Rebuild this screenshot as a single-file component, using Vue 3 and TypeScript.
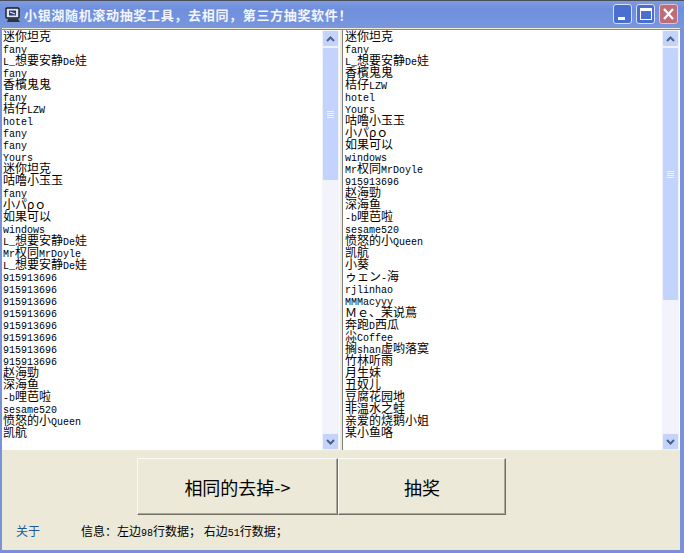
<script setup lang="ts">
const left: string[] = ['迷你坦克','fany','L_想要安静De娃','fany','香檳鬼鬼','fany','桔仔LZW','hotel','fany','fany','Yours','迷你坦克','咕噜小玉玉','fany','小パρｏ','如果可以','windows','L_想要安静De娃','Mr权同MrDoyle','L_想要安静De娃','915913696','915913696','915913696','915913696','915913696','915913696','915913696','915913696','赵海勁','深海鱼','-b哩芭啦','sesame520','愤怒的小Queen','凯航']
const right: string[] = ['迷你坦克','fany','L_想要安静De娃','香檳鬼鬼','桔仔LZW','hotel','Yours','咕噜小玉玉','小パρｏ','如果可以','windows','Mr权同MrDoyle','915913696','赵海勁','深海鱼','-b哩芭啦','sesame520','愤怒的小Queen','凯航','小葵','ゥェン-海','rjlinhao','MMMacyyy','Ｍｅ、茉说蔦','奔跑D西瓜','尛Coffee','搁shan虚哟落寞','竹林听雨','月生妹','丑奴儿','豆腐花园地','非温水之蛙','亲爱的烧鹅小姐','某小鱼咯']

interface Seg { t: string; lat: boolean }
function segs(s: string): Seg[] {
  return (s.match(/[\x20-\x7e]+|[^\x20-\x7e]+/g) ?? []).map((t) => ({ t, lat: /^[\x20-\x7e]/.test(t) }))
}
const lists = [
  { rows: left, thumb: 134 },
  { rows: right, thumb: 254 },
]
</script>

<template>
  <div class="window">
    <header class="titlebar">
      <svg class="appicon" width="18" height="18" viewBox="0 0 18 18">
        <rect x="2" y="2" width="13" height="10" rx="1" fill="#dfe6f2" stroke="#1c1c24" stroke-width="1.4" />
        <rect x="5" y="4.5" width="7" height="5" fill="#2a3a6a" />
        <path d="M4 13h10l2 3H3z" fill="#30343c" />
        <path d="M6 6l5 2" stroke="#e8eef8" stroke-width="1.2" />
      </svg>
      <span class="title">小银湖随机滚动抽奖工具，去相同，第三方抽奖软件！</span>
      <div class="controls">
        <button class="ctl"><svg width="19" height="20" viewBox="0 0 19 20"><rect x="5" y="13" width="7" height="3" fill="#fff" /></svg></button>
        <button class="ctl"><svg width="19" height="20" viewBox="0 0 19 20"><rect x="4.5" y="4.5" width="11" height="11" fill="none" stroke="#fff" /><rect x="4" y="4" width="12" height="3" fill="#fff" /></svg></button>
        <button class="ctl close"><svg width="19" height="20" viewBox="0 0 19 20"><path d="M5 5l9 10M14 5L5 15" stroke="#fff" stroke-width="2.2" /></svg></button>
      </div>
    </header>
    <main class="client">
      <section class="lists">
        <div v-for="(l, i) in lists" :key="i" class="listbox">
          <div class="rows">
            <div v-for="(r, j) in l.rows" :key="j" class="row">
              <span v-for="(s, k) in segs(r)" :key="k" :class="{ lat: s.lat }">{{ s.t }}</span>
            </div>
          </div>
          <div class="sbar">
            <div class="sbtn">
              <svg width="9" height="6" viewBox="0 0 9 6"><path d="M1 5l3.5-3.5L8 5" fill="none" stroke="#4d6185" stroke-width="2" /></svg>
            </div>
            <div class="thumb" :style="{ height: l.thumb + 'px' }">
              <i /><i /><i /><i />
            </div>
            <div class="track" />
            <div class="sbtn">
              <svg width="9" height="6" viewBox="0 0 9 6"><path d="M1 1l3.5 3.5L8 1" fill="none" stroke="#4d6185" stroke-width="2" /></svg>
            </div>
          </div>
        </div>
      </section>
      <section class="actions">
        <button class="big first">相同的去掉-&gt;</button>
        <button class="big second">抽奖</button>
      </section>
      <footer class="status">
        <a class="about">关于</a>
        <span class="info">信息：左边<span class="lat">98</span>行数据； 右边<span class="lat">51</span>行数据；</span>
      </footer>
    </main>
  </div>
</template>

<style>
html, body { margin: 0; background: #ece9d8; }
</style>

<style scoped>
.window {
  width: 684px;
  height: 553px;
  display: flex;
  flex-direction: column;
  overflow: hidden;
  background: #ece9d8;
  font-family: "Noto Sans CJK SC", sans-serif;
  color: #000;
}
.titlebar {
  height: 28px;
  flex: none;
  display: flex;
  align-items: center;
  padding: 0 6px 0 4px;
  box-sizing: border-box;
  border-top: 1px solid #4a4f5c;
  background: linear-gradient(#7f9be0, #6f8fdd 30%, #7594de 80%, #7e97d6);
}
.appicon { flex: none; }
.title {
  margin-left: 2px;
  color: #f2f5fc;
  font-size: 13px;
  font-weight: 700;
  letter-spacing: 0.67px;
  white-space: nowrap;
}
.controls { margin-left: auto; display: flex; gap: 4px; margin-top: -2px; }
.ctl {
  width: 19px;
  height: 20px;
  padding: 0;
  display: block;
  border: 1px solid #d5dff5;
  border-radius: 3px;
  background: #4a6fd0;
  box-sizing: content-box;
  margin: 0;
  width: 17px;
  height: 18px;
  overflow: hidden;
}
.ctl svg { display: block; margin: -1px; }
.close { background: #bd6c78; border-color: #e0c5cc; }
.client {
  flex: 1;
  display: flex;
  flex-direction: column;
  border-left: 2px solid #7a92d8;
  border-right: 4px solid #7a92d8;
  border-bottom: 3px solid #7a8fd8;
  min-height: 0;
}
.lists {
  height: 420px;
  flex: none;
  margin-top: 1px;
  display: flex;
  gap: 2px;
  border-top: 1px solid #8d8d88;
}
.listbox {
  flex: none;
  width: 338px;
  display: flex;
  background: #fff;
  border-left: 1px solid #808080;
  box-sizing: border-box;
}
.listbox:first-child { width: 338px; border-left: 0; }
.rows { flex: 1; padding: 0 0 0 1px; overflow: hidden; }
.listbox:nth-child(2) .rows { padding-left: 2px; }
.row {
  height: 12px;
  line-height: 12px;
  font-size: 12px;
  white-space: nowrap;
}
.lat { font-family: "Liberation Mono", monospace; font-size: 10px; }
.sbar {
  flex: none;
  width: 17px;
  margin-right: 1px;
  display: flex;
  flex-direction: column;
  background: #f3f3fb;
}
.sbtn {
  height: 17px;
  flex: none;
  box-sizing: border-box;
  border: 1px solid #eef2fd;
  border-radius: 2px;
  background: #c4d3fa;
  display: flex;
  align-items: center;
  justify-content: center;
}
.thumb {
  flex: none;
  box-sizing: border-box;
  border: 1px solid #eef2fd;
  border-radius: 2px;
  background: #c3d3fb;
  display: flex;
  flex-direction: column;
  align-items: center;
  justify-content: center;
  gap: 1px;
}
.thumb i { display: block; width: 7px; height: 1px; background: #eef3fe; }
.track { flex: 1; }
.actions {
  display: flex;
  margin: 8px 0 0 135px;
}
.big {
  height: 57px;
  margin: 0;
  padding: 0;
  background: #ece9d8;
  font-family: inherit;
  font-size: 18px;
  color: #000;
  border: 1px solid;
  border-color: #fbfaf5 #716f64 #716f64 #fbfaf5;
  box-shadow: inset -1px -1px 0 #aca899;
}
.first { width: 201px; }
.second { width: 168px; }
.status {
  display: flex;
  align-items: center;
  height: 30px;
  font-size: 12px;
}
.about { margin-left: 14px; color: #21589c; width: 65px; }
.info { white-space: pre; }
</style>
